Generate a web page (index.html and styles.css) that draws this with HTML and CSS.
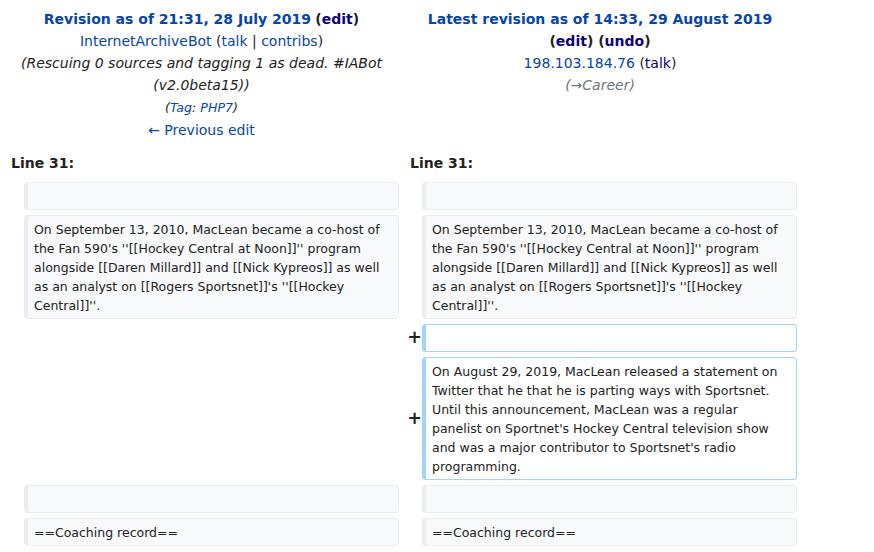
FILE: index.html
```html
<!DOCTYPE html>
<html lang="en">
<head>
<meta charset="utf-8">
<title>Diff</title>
<link rel="stylesheet" href="styles.css">
</head>
<body>
<div class="diff">
  <div class="title">
    <div class="t-line"><a class="strong" href="#">Revision as of 21:31, 28 July 2019</a> <span class="strong">(<a class="visited" href="#">edit</a>)</span></div>
    <div class="t-line"><a href="#">InternetArchiveBot</a> (<a href="#">talk</a> | <a href="#">contribs</a>)</div>
    <div class="t-line comment">(Rescuing 0 sources and tagging 1 as dead. #IABot (v2.0beta15))</div>
    <div class="t-line"><span class="tags">(<a href="#">Tag</a>: <a href="#">PHP7</a>)</span></div>
    <div class="t-line"><a href="#">← Previous edit</a></div>
  </div>
  <div class="title">
    <div class="t-line"><a class="strong" href="#">Latest revision as of 14:33, 29 August 2019</a> <span class="strong">(<a class="visited" href="#">edit</a>) (<a class="visited" href="#">undo</a>)</span></div>
    <div class="t-line"><a href="#">198.103.184.76</a> (<a class="visited" href="#">talk</a>)</div>
    <div class="t-line autocomment">(→Career)</div>
  </div>

  <div class="lineno">Line 31:</div>
  <div class="lineno">Line 31:</div>

  <div class="marker"></div>
  <div class="cell context">&nbsp;</div>
  <div class="marker"></div>
  <div class="cell context">&nbsp;</div>

  <div class="marker"></div>
  <div class="cell context">On September 13, 2010, MacLean became a co-host of the Fan 590's ''[[Hockey Central at Noon]]'' program alongside [[Daren Millard]] and [[Nick Kypreos]] as well as an analyst on [[Rogers Sportsnet]]'s ''[[Hockey Central]]''.</div>
  <div class="marker"></div>
  <div class="cell context">On September 13, 2010, MacLean became a co-host of the Fan 590's ''[[Hockey Central at Noon]]'' program alongside [[Daren Millard]] and [[Nick Kypreos]] as well as an analyst on [[Rogers Sportsnet]]'s ''[[Hockey Central]]''.</div>

  <div class="empty"></div>
  <div class="marker plus">+</div>
  <div class="cell added">&nbsp;</div>

  <div class="empty"></div>
  <div class="marker plus">+</div>
  <div class="cell added">On August 29, 2019, MacLean released a statement on Twitter that he that he is parting ways with Sportsnet. Until this announcement, MacLean was a regular panelist on Sportnet's Hockey Central television show and was a major contributor to Sportsnet's radio programming.</div>

  <div class="marker"></div>
  <div class="cell context">&nbsp;</div>
  <div class="marker"></div>
  <div class="cell context">&nbsp;</div>

  <div class="marker"></div>
  <div class="cell context">==Coaching record==</div>
  <div class="marker"></div>
  <div class="cell context">==Coaching record==</div>
</div>
</body>
</html>
```

FILE: styles.css
```css
html, body {
  margin: 0;
  padding: 0;
  background: #ffffff;
}

body {
  font-family: "DejaVu Sans", "Liberation Sans", sans-serif;
  font-size: 14px;
  color: #222222;
}

a {
  color: #0645ad;
  text-decoration: none;
}

a.visited {
  color: #0b0080;
}

.diff {
  display: grid;
  grid-template-columns: 16px 375px 15px 375px;
  column-gap: 4px;
  row-gap: 5px;
  padding: 4px;
  width: max-content;
}

.title {
  grid-column: span 2;
  text-align: center;
  padding: 4px 7px 3px;
  line-height: 22px;
}

.strong {
  font-weight: bold;
}

.comment {
  font-style: italic;
  color: #222222;
}

.autocomment {
  font-style: italic;
  color: #72777d;
}

.tags {
  font-style: italic;
  font-size: 12.6px;
  color: #222222;
}

.lineno {
  grid-column: span 2;
  font-weight: bold;
  padding: 3px 7px 3px;
  line-height: 22px;
}

.marker {
  display: flex;
  align-items: center;
  justify-content: center;
}

.plus {
  font-weight: bold;
  font-size: 17.5px;
  line-height: 1;
  padding-left: 8px;
}

.empty {
  grid-column: span 2;
}

.cell {
  font-size: 12.5px;
  line-height: 19px;
  padding: 3.5px 6px;
  border-style: solid;
  border-width: 1px 1px 1px 4px;
  border-radius: 4px;
  white-space: pre-wrap;
  word-wrap: break-word;
  color: #222222;
}

.context {
  background: #f8f9fa;
  border-color: #eaecf0;
}

.added {
  background: #ffffff;
  border-color: #a3d3ff;
}
```
